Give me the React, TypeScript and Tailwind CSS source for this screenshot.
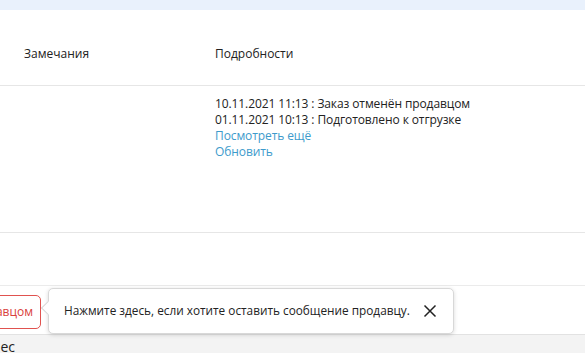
import React from "react";

export default function App() {
  const font = { fontFamily: '"Open Sans", "Noto Sans", Arial, sans-serif' };
  return (
    <div className="w-[585px] h-[353px] overflow-hidden bg-white text-[#222] relative" style={font}>
      <div className="h-[10px] bg-[#e9f1fc]" />
      <div className="h-[76px] border-b border-[#e6e6e6] flex items-center pt-[13px] text-[12px]">
        <div className="w-[215px] pl-[24px]">Замечания</div>
        <div>Подробности</div>
      </div>
      <div className="h-[147px] border-b border-[#e6e6e6] flex text-[12px] leading-[16px] pt-[10px]">
        <div className="w-[215px]" />
        <div className="flex flex-col tracking-[-0.1px]">
          <span>10.11.2021 11:13 : Заказ отменён продавцом</span>
          <span>01.11.2021 10:13 : Подготовлено к отгрузке</span>
          <span className="text-[#3d9bcc]">Посмотреть ещё</span>
          <span className="text-[#3d9bcc]">Обновить</span>
        </div>
      </div>
      <div className="h-[53px] border-b border-[#ebebeb]" />
      <div className="h-[49px] border-b border-[#e2e2e2] flex items-start pt-[9px]">
        <div className="w-[41px] overflow-hidden flex justify-end">
          <div className="shrink-0 h-[34px] px-[7px] flex items-center border border-[#e0524f] rounded-[5px] text-[#d9403b] text-[12px]">
            Связаться с продавцом
          </div>
        </div>
      </div>
      <div className="bg-[#f3f3f3] h-[20px] pt-[1px] flex">
        <div className="w-[15px] overflow-hidden flex justify-end text-[14px]">
          <span className="shrink-0">Адрес</span>
        </div>
      </div>

      <div className="absolute left-[48px] top-[288px] w-[406px] h-[46px] bg-white border border-[#d8d8d8] rounded-[5px] shadow-[0_1px_4px_rgba(0,0,0,0.15)] flex items-center pl-[15px] pr-[16px] text-[11.8px] text-[#222]">
        <div className="absolute -left-[6px] top-[14px] w-[10px] h-[10px] bg-white border-l border-b border-[#d8d8d8] rotate-45" />
        <span className="flex-1 whitespace-nowrap">Нажмите здесь, если хотите оставить сообщение продавцу.</span>
        <svg width="14" height="14" viewBox="0 0 14 14">
          <path d="M1.5 1.5 L12.5 12.5 M12.5 1.5 L1.5 12.5" stroke="#222" strokeWidth="1.5" fill="none" />
        </svg>
      </div>
    </div>
  );
}
